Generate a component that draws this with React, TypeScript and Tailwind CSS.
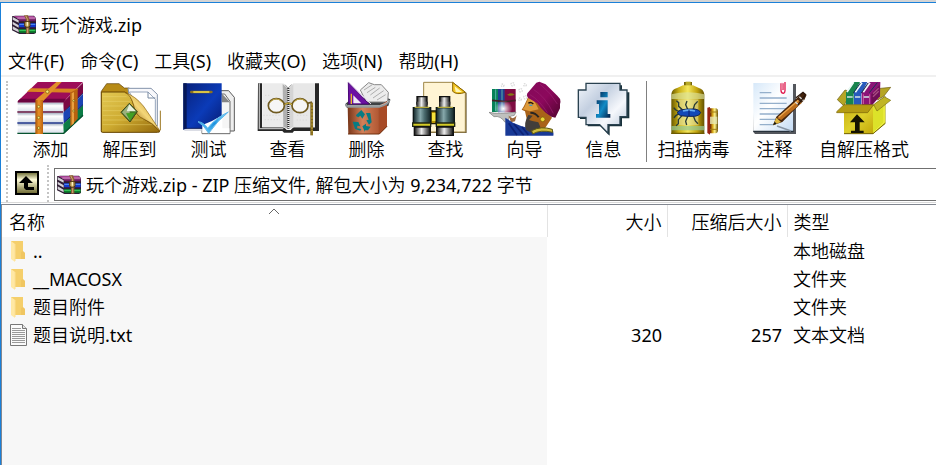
import React from 'react';

const AddIcon: React.FC = () => (
  <svg viewBox="42 15 216 165" className="h-[55px] w-[72px]" aria-hidden="true">
    <defs>
      <linearGradient id="pages" x1="0" x2="0" y1="0" y2="1">
        <stop offset="0" stopColor="#a9b4c4" />
        <stop offset=".35" stopColor="#fff" />
        <stop offset="1" stopColor="#d9e0ea" />
      </linearGradient>
      <linearGradient id="strap" x1="0" x2="1">
        <stop offset="0" stopColor="#a85408" />
        <stop offset=".45" stopColor="#e79026" />
        <stop offset="1" stopColor="#bd6410" />
      </linearGradient>
    </defs>
    <path d="M187 144 246 86V120L188 174Z" fill="#0b7c46" />
    <path d="M187 110 246 54V86L188 142Z" fill="#1c45b4" />
    <path d="M187 78 246 20V52L188 108Z" fill="#7c0844" />
    <path d="M50 76 110 18H246L187 78Z" fill="#9d0d58" />
    <path d="M50 76 58 68H195L187 80H50Z" fill="#6c0440" />
    <path d="M50 80H186V106H50Z" fill="url(#pages)" />
    <path d="M50 111H186V138H50Z" fill="url(#pages)" />
    <path d="M50 143H186V171H50Z" fill="url(#pages)" />
    <path d="M49 108H186" stroke="#5a0b39" strokeWidth="5" />
    <path d="M49 141H186" stroke="#132b83" strokeWidth="5" />
    <path d="M49 172H188L246 118" stroke="#07532f" strokeWidth="4" fill="none" />
    <path d="M188 108 246 52M188 141 246 86" stroke="#0b1d62" strokeWidth="3" />
    <path d="M78 47 90 37 232 38 222 50Z" fill="#d98420" />
    <path d="M103 72 166 18H182L126 76Z" fill="#e08f29" />
    <path d="M103 72H126V174H103Z" fill="url(#strap)" />
    <path d="M207 50 230 38V128L208 152Z" fill="#b9620f" />
    <path d="M212 52 219 48V142L212 148Z" fill="#e9a040" />
    <g fill="#f5e978" stroke="#7c5606" strokeWidth="2">
      <circle cx="139" cy="47" r="5" />
      <circle cx="113" cy="92" r="4" />
      <circle cx="113" cy="125" r="4" />
      <circle cx="113" cy="156" r="4" />
      <circle cx="218" cy="74" r="3" />
      <circle cx="218" cy="105" r="3" />
    </g>
  </svg>
);

const ExtractIcon: React.FC = () => (
  <svg viewBox="282 15 216 165" className="h-[55px] w-[72px]" aria-hidden="true">
    <defs>
      <linearGradient id="folder" x1="0" x2="1" y1="0" y2="1">
        <stop offset="0" stopColor="#e3c954" />
        <stop offset=".5" stopColor="#cdaa30" />
        <stop offset="1" stopColor="#94690c" />
      </linearGradient>
      <linearGradient id="flap" x1="0" x2="1" y1="1" y2="0">
        <stop offset=".2" stopColor="#8c5c06" />
        <stop offset=".5" stopColor="#f4d779" />
        <stop offset="1" stopColor="#a8770c" />
      </linearGradient>
    </defs>
    <path d="M304 46 320 23H357L373 36H388V168H304Z" fill="#b78b16" stroke="#5b3d03" strokeWidth="2" />
    <path d="M384 37H453L472 55V150L395 120Z" fill="#f8f8fb" stroke="#8493aa" strokeWidth="3" />
    <path d="M388 48H444L466 70V150L430 120Z" fill="#fff" stroke="#97a6bc" strokeWidth="3" />
    <path d="M444 48V66H466" fill="none" stroke="#7788a0" strokeWidth="3" />
    <path d="M304 48H374Q392 54 400 84 406 118 430 128 458 140 480 166 478 169 472 169H308Q304 169 304 164Z" fill="url(#folder)" stroke="#694703" strokeWidth="3" />
    <path d="M308 62H380M308 76H392M308 90H398M308 104H402M308 118H410M308 132H430M308 146H455" stroke="#f0dc7a" strokeWidth="2" opacity=".6" />
    <path d="M374 49Q392 56 400 84 408 122 430 128 458 140 480 165 446 112 430 90 406 60 374 49Z" fill="url(#flap)" stroke="#8b620c" strokeWidth="2" />
    <path d="M481 163V104" fill="none" stroke="#9c7620" strokeWidth="3" />
    <path d="M388 82 412 107 390 138 363 109Z" fill="#427b27" stroke="#40431b" strokeWidth="3" />
    <path d="M388 84 390 134 366 109Z" fill="#9bb07d" />
    <path d="M388 85 408 106H380Z" fill="#e9f0dd" />
    <path d="M378 112 405 110 390 134Z" fill="#42a024" />
  </svg>
);

const TestIcon: React.FC = () => (
  <svg viewBox="9 15 216 165" className="h-[55px] w-[72px]" aria-hidden="true">
    <defs>
      <linearGradient id="book" x1="0" x2="1" y1="0" y2="1">
        <stop offset="0" stopColor="#082078" />
        <stop offset=".55" stopColor="#0b3bb8" />
        <stop offset="1" stopColor="#061a70" />
      </linearGradient>
      <linearGradient id="check" x1="0" x2="1" y1="1" y2="0">
        <stop offset="0" stopColor="#76d2f8" />
        <stop offset=".5" stopColor="#1d93e0" />
        <stop offset="1" stopColor="#8adcff" />
      </linearGradient>
    </defs>
    <path d="M126 44H176L193 64V165H126Z" fill="#eee" stroke="#5a5a5a" strokeWidth="3" />
    <path d="M96 54H164L180 76V173H96Z" fill="#f5f5f5" stroke="#6b6b6b" strokeWidth="3" />
    <path d="M154 51 180 79H156Z" fill="#858585" />
    <path d="M40 22H155V158H50L40 161Z" fill="url(#book)" />
    <path d="M40 22H50V157L40 161Z" fill="#051858" />
    <path d="M43 162H97" stroke="#c9cdd8" strokeWidth="4" />
    <path d="M48 157H98" stroke="#101030" strokeWidth="2" />
    <path d="M64 48H124" stroke="#8d721c" strokeWidth="8" strokeLinecap="round" />
    <path d="M70 48H118" stroke="#ffec58" strokeWidth="4" />
    <path d="M97 147 126 135 157 118V157H178V171H97Z" fill="#fff" />
    <path d="M84 137Q102 139 113 157Q136 126 175 108Q143 133 116 172Q103 149 84 137Z" fill="url(#check)" stroke="#5eb7eb" strokeWidth="3" />
  </svg>
);

const ViewIcon: React.FC = () => (
  <svg viewBox="246 15 216 165" className="h-[55px] w-[72px]" aria-hidden="true">
    <path d="M264 22 276 22V154H344L350 162H362L370 154H435V22H447V165H372L368 170H342L337 165H263Z" fill="#272727" />
    <path d="M268 22V158H340" fill="none" stroke="#b6b6b6" strokeWidth="4" />
    <path d="M277 22H340L354 37V161L338 154H277Z" fill="#ebebeb" />
    <path d="M435 22H370L356 37V161L372 154H435Z" fill="#e7e7e7" />
    <path d="M338 24 354 38V158L340 152Z" fill="#b0b0b0" />
    <path d="M356 38 370 25V152L357 158Z" fill="#d4d4d4" />
    <path d="M355 36V158" stroke="#292929" strokeWidth="6" strokeDasharray="3 3" />
    <path d="M345 26 354 36 365 26" fill="none" stroke="#6b6b6b" strokeWidth="2" />
    <path d="M285 58H300M285 76H294M280 118H332M284 131H330M381 118H415M380 132H415" stroke="#d3d3d3" strokeWidth="2" strokeDasharray="4 5" />
    <g fill="none" stroke="#6f5a20" strokeWidth="5">
      <ellipse cx="319" cy="89" rx="24" ry="21" fill="#f6f6f6" />
      <ellipse cx="390" cy="89" rx="24" ry="21" fill="#f6f6f6" />
      <path d="M342 86Q355 78 368 86M413 82 426 78" />
    </g>
    <path d="M300 79Q318 58 337 79M371 79Q390 58 409 79" fill="none" stroke="#c6ad4a" strokeWidth="3" />
    <path d="M344 86Q355 76 366 86" fill="none" stroke="#e7c945" strokeWidth="3" />
    <path d="M425 80V178" stroke="#79601c" strokeWidth="8" />
    <path d="M426 82V176" stroke="#c7aa37" strokeWidth="3" strokeDasharray="7 3" />
  </svg>
);

const DeleteIcon: React.FC = () => (
  <svg viewBox="0 15 216 165" className="h-[55px] w-[72px]" aria-hidden="true">
    <defs>
      <linearGradient id="bin" x1="0" x2="1">
        <stop offset="0" stopColor="#773518" />
        <stop offset=".38" stopColor="#d28059" />
        <stop offset=".76" stopColor="#b45b36" />
        <stop offset="1" stopColor="#68270e" />
      </linearGradient>
    </defs>
    <path d="M43 84 54 74 160 62 178 70 172 90 145 96H48Z" fill="#3e4244" />
    <path d="M88 42 113 20 130 26 151 26 172 49 170 78H106Z" fill="#ececec" stroke="#888" strokeWidth="3" />
    <path d="M99 42 124 26M108 50 133 34M118 57 146 36M126 66 158 44M138 72 164 56" stroke="#adadad" strokeWidth="3" />
    <path d="M52 20 114 84H53Z" fill="#6c11a2" stroke="#4b0778" strokeWidth="3" />
    <path d="M53 18 120 84" stroke="#e5d8ef" strokeWidth="3" />
    <path d="M67 58 91 82H67Z" fill="#f1e9f5" />
    <path d="M61 53V84" stroke="#e7bc25" strokeWidth="4" />
    <path d="M50 91H145L168 75V151L145 174H52Z" fill="url(#bin)" />
    <path d="M145 91 168 75V151L145 174Z" fill="#a84b27" />
    <path d="M51 174H145L168 151" stroke="#70300f" strokeWidth="3" fill="none" />
    <path d="M45 84Q44 92 53 92H145Q171 86 176 72" fill="none" stroke="#909699" strokeWidth="6" />
    <path d="M50 89H145Q165 83 172 75" fill="none" stroke="#d9dfe1" strokeWidth="2" />
    <g fill="#087b83">
      <path d="M76 116 91 102 102 115 94 128 88 119 82 124 75 120Z" />
      <path d="M105 111H118L122 139 114 146 106 133 113 131Z" />
      <path d="M94 151 105 143V150L119 152 111 163H102V168Z" />
      <path d="M65 137 82 138 88 151 79 149 78 157 91 159 88 164 72 159Z" />
    </g>
  </svg>
);

const FindIcon: React.FC = () => (
  <svg viewBox="240 15 216 165" className="h-[55px] w-[72px]" aria-hidden="true">
    <defs>
      <linearGradient id="barrel" x1="0" x2="1">
        <stop offset="0" stopColor="#1b3033" />
        <stop offset=".4" stopColor="#86a8ab" />
        <stop offset=".65" stopColor="#4b6c6f" />
        <stop offset="1" stopColor="#182a2c" />
      </linearGradient>
      <linearGradient id="metal" x1="0" x2="1">
        <stop offset="0" stopColor="#111" />
        <stop offset=".45" stopColor="#eee" />
        <stop offset="1" stopColor="#111" />
      </linearGradient>
    </defs>
    <path d="M283 22H370L410 51V171H283Z" fill="#73633f" />
    <path d="M281 19H368L406 49V168H281Z" fill="#fff4d4" stroke="#9d8547" strokeWidth="3" />
    <path d="M368 19 406 49Q380 58 368 46Z" fill="#f2c522" stroke="#8c6500" strokeWidth="3" />
    <path d="M374 31 396 48H377Z" fill="#fff6b6" />
    <path d="M302 105H319V143H302Z" fill="#b99405" stroke="#221c02" strokeWidth="4" />
    <path d="M306 111H317V135H306Z" fill="#f4e13c" />
    <path d="M261 62H291V84H261Z" fill="url(#metal)" stroke="#111" strokeWidth="4" />
    <path d="M329 62H359V84H329Z" fill="url(#metal)" stroke="#111" strokeWidth="4" />
    <path d="M259 77H293V96H259Z" fill="url(#metal)" />
    <path d="M327 77H361V96H327Z" fill="url(#metal)" />
    <path d="M250 95H302V143H250ZM319 95H373V143H319Z" fill="#0d1718" stroke="#0d1718" strokeWidth="4" />
    <path d="M252 97H300V141H252Z" fill="url(#barrel)" />
    <path d="M321 97H371V141H321Z" fill="url(#barrel)" />
    <path d="M254 94H298M323 94H369" stroke="#b1a638" strokeWidth="4" />
    <path d="M246 139H304V153H246ZM317 139H376V153H317Z" fill="#202612" />
    <path d="M250 146H300M321 146H372" stroke="#d4cb28" strokeWidth="6" />
    <path d="M253 153H301V178H253Z" fill="url(#metal)" stroke="#111" strokeWidth="4" />
    <path d="M320 153H370V178H320Z" fill="url(#metal)" stroke="#111" strokeWidth="4" />
  </svg>
);

const WizardIcon: React.FC = () => (
  <svg viewBox="27 15 216 165" className="h-[55px] w-[72px]" aria-hidden="true">
    <defs>
      <linearGradient id="turban" x1="0" x2="1" y1="0" y2="1">
        <stop offset="0" stopColor="#850a5a" />
        <stop offset=".5" stopColor="#8c085c" />
        <stop offset="1" stopColor="#51052f" />
      </linearGradient>
      <radialGradient id="glow">
        <stop offset="0" stopColor="#fff" />
        <stop offset="1" stopColor="#fff" stopOpacity="0" />
      </radialGradient>
    </defs>
    <g fill="none" stroke="#d8d8d8" strokeWidth="4" strokeDasharray="4 3">
      <circle cx="68" cy="28" r="4" />
      <circle cx="98" cy="25" r="5" />
      <circle cx="122" cy="43" r="5" />
      <circle cx="136" cy="64" r="5" />
      <circle cx="120" cy="70" r="4" />
      <circle cx="135" cy="27" r="4" />
    </g>
    <path d="M36 39H56V108H36Z" fill="#078258" />
    <path d="M54 39H76V109H54Z" fill="#203f91" />
    <path d="M74 39H107V109H74Z" fill="#7f0c42" />
    <path d="M47 40V105M66 40V105" stroke="#56b1a8" strokeWidth="3" />
    <path d="M36 73 76 77 107 73" stroke="#422025" strokeWidth="5" fill="none" />
    <path d="M81 56Q92 48 104 56Q92 62 81 56Z" fill="#837c13" />
    <ellipse cx="70" cy="98" rx="27" ry="25" fill="url(#glow)" />
    <path d="M27 109Q57 116 108 108L103 118Q83 121 85 132L75 139Q62 118 42 122Z" fill="#bfc0be" stroke="#777" strokeWidth="2" />
    <path d="M85 118Q99 135 110 118L105 136 93 139Z" fill="#9d693d" />
    <path d="M76 178V125L99 140Q121 150 147 157L216 159Q222 167 220 179H76Z" fill="#183996" />
    <path d="M86 142 111 177M102 144 131 177M126 153 145 176" stroke="#0d2276" strokeWidth="5" />
    <path d="M145 62 132 90 125 101 135 106 139 124 150 158H194L216 125 187 91 160 62Z" fill="#a96319" />
    <path d="M145 66 134 92 128 100 150 106 176 100 160 70Z" fill="#dd9a3a" />
    <path d="M145 82Q152 76 160 84" stroke="#261507" strokeWidth="4" fill="none" />
    <path d="M148 88H157" stroke="#3f9ac0" strokeWidth="4" />
    <path d="M145 117Q130 142 138 162L160 173 181 153 175 139 157 135 147 132 158 119Z" fill="#423e3b" />
    <path d="M151 110Q167 110 176 124" stroke="#292522" strokeWidth="6" fill="none" />
    <path d="M145 66Q136 56 146 47L169 20 178 17 197 25 232 59Q245 70 240 84V97L226 125 214 122 197 110Q182 98 172 82Z" fill="url(#turban)" />
    <path d="M150 56Q178 72 202 110M160 40Q196 62 220 112M180 24Q214 52 232 84" stroke="#9a2170" strokeWidth="2" fill="none" />
    <circle cx="188" cy="130" r="7" fill="#ead738" stroke="#775c04" strokeWidth="2" />
    <path d="M155 164Q183 149 217 160L218 169Q181 160 158 174Z" fill="#cdbb3c" stroke="#5e5813" strokeWidth="3" />
  </svg>
);

const InfoIcon: React.FC = () => (
  <svg viewBox="264 15 216 165" className="h-[55px] w-[72px]" aria-hidden="true">
    <defs>
      <linearGradient id="bubble" x1="0" x2="1" y1="0" y2="1">
        <stop offset="0" stopColor="#f2f6fb" />
        <stop offset=".35" stopColor="#c3cfe0" />
        <stop offset=".65" stopColor="#f6f8fc" />
        <stop offset="1" stopColor="#aebfd3" />
      </linearGradient>
      <linearGradient id="letter" x1="0" x2="1" y1="0" y2="1">
        <stop offset="0" stopColor="#021e49" />
        <stop offset=".55" stopColor="#118bc6" />
        <stop offset="1" stopColor="#021c44" />
      </linearGradient>
    </defs>
    <path d="M324 28H426V49H448V127H426V151H389V179L363 151H323V129H300V48H324Z" fill="#18313a" />
    <path d="M318 22H420V42H441V122H420V146H384V172L359 146H318V124H295V42H318Z" fill="url(#bubble)" stroke="#2a4250" strokeWidth="4" />
    <path d="M361 48H383V64H361ZM350 73H383V114H391V125H348V114H357V84H350Z" fill="url(#letter)" />
  </svg>
);

const ScanIcon: React.FC = () => (
  <svg viewBox="51 15 216 165" className="h-[55px] w-[72px]" aria-hidden="true">
    <defs>
      <linearGradient id="can" x1="0" x2="1">
        <stop offset="0" stopColor="#695900" />
        <stop offset=".22" stopColor="#c6ac13" />
        <stop offset=".5" stopColor="#f5e75b" />
        <stop offset=".78" stopColor="#c2a30d" />
        <stop offset="1" stopColor="#645100" />
      </linearGradient>
      <linearGradient id="cap" x1="0" x2="1">
        <stop offset="0" stopColor="#681b08" />
        <stop offset=".3" stopColor="#cf9d12" />
        <stop offset=".6" stopColor="#fff48a" />
        <stop offset="1" stopColor="#604900" />
      </linearGradient>
    </defs>
    <path d="M129 18H153V32H129Z" fill="#75640b" />
    <path d="M134 17H149V29H134Z" fill="#b9aa26" />
    <path d="M91 55Q92 39 110 35L126 28H156L172 35Q188 39 190 55V174H91Z" fill="url(#can)" />
    <path d="M91 55Q139 42 190 55V69H91Z" fill="#dce3a0" opacity=".65" />
    <path d="M110 70H172V148H110Z" fill="#e3e6b8" opacity=".5" />
    <path d="M91 150H190V163H91Z" fill="#94c999" opacity=".7" />
    <path d="M91 172H190" stroke="#6d5b00" strokeWidth="4" />
    <g stroke="#283b36" strokeWidth="4" fill="none">
      <path d="M125 102 113 91V80L106 74M141 102 134 86 138 75M156 102 161 86 170 76M123 119 112 131V143L105 149M141 119 134 136 137 147M157 119 163 135 171 143" />
      <path d="M116 106Q104 105 98 95M116 114Q105 115 99 126" />
    </g>
    <path d="M108 110 118 102Q135 98 162 99Q176 101 179 110Q175 120 161 121Q139 122 118 119Z" fill="#1248b7" stroke="#162654" strokeWidth="3" />
    <path d="M126 105Q144 100 162 105" stroke="#65adf4" strokeWidth="5" fill="none" />
    <path d="M144 101V120" stroke="#0a216e" strokeWidth="3" />
    <path d="M199 95 207 93V176L199 171Z" fill="#9a2414" />
    <path d="M207 97H226Q231 99 231 106V162Q231 171 224 172H207Z" fill="url(#cap)" />
    <path d="M207 108H231M207 160H231" stroke="#9f7d14" strokeWidth="3" />
    <path d="M207 122H229V144H207Z" fill="#e6e9b4" opacity=".8" />
  </svg>
);

const CommentIcon: React.FC = () => (
  <svg viewBox="294 15 216 165" className="h-[55px] w-[72px]" aria-hidden="true">
    <defs>
      <linearGradient id="note" x1="0" x2="1" y1="0" y2="1">
        <stop offset="0" stopColor="#d6e8f9" />
        <stop offset=".45" stopColor="#fff" />
        <stop offset="1" stopColor="#c5dcf5" />
      </linearGradient>
    </defs>
    <path d="M342 24H465V174H342L337 168Z" fill="#53565c" />
    <path d="M337 21H456V165H337Z" fill="url(#note)" />
    <path d="M356 50H391M356 66H437M356 82H437M356 98H437M356 114H437M356 130H411M356 146H396" stroke="#94afcb" strokeWidth="4" />
    <path d="M337 166H458" stroke="#27313b" strokeWidth="4" />
    <path d="M408 150 450 165" stroke="#8795a5" strokeWidth="4" />
    <path d="M420 22V44Q421 52 427 52Q432 50 432 44V18M426 22V42" fill="none" stroke="#e01b50" strokeWidth="4" />
    <path d="M423 20V40" stroke="#f6a0b4" strokeWidth="2" />
    <path d="M396 148 406 122 468 66 486 49 497 56 490 72 424 138Z" fill="#45250d" />
    <path d="M408 127 470 71 482 81 421 132Z" fill="#bc6d1c" />
    <path d="M413 124 472 73" stroke="#eba64d" strokeWidth="4" />
    <path d="M396 148 406 125 420 138Z" fill="#deb643" />
    <path d="M396 148 401 137 407 143Z" fill="#151515" />
    <path d="M463 78 474 88M475 62 488 74" stroke="#d7d9d9" strokeWidth="4" />
    <path d="M465 65 486 49 494 56M492 58 470 88" stroke="#29160b" strokeWidth="4" fill="none" />
  </svg>
);

const SfxIcon: React.FC = () => (
  <svg viewBox="144 15 216 165" className="h-[55px] w-[72px]" aria-hidden="true">
    <defs>
      <linearGradient id="box" x1="0" x2="1" y1="0" y2="1">
        <stop offset="0" stopColor="#c9ae16" />
        <stop offset=".5" stopColor="#ddd02a" />
        <stop offset="1" stopColor="#c3a70a" />
      </linearGradient>
    </defs>
    <path d="M172 71 195 42 212 47 192 90ZM292 38 332 34 312 60 293 72Z" fill="#b5a524" stroke="#6a5910" strokeWidth="2" />
    <path d="M192 88H280L316 60V142L279 173H192Z" fill="#5e510b" />
    <path d="M198 49 222 18H240L221 54V86H198Z" fill="#18844e" />
    <path d="M222 49 245 18H262L244 54V86H222Z" fill="#275abd" />
    <path d="M245 49 268 18H301L300 61 274 90H245Z" fill="#8b1377" />
    <path d="M201 48 221 19M226 49 246 20M250 49 270 20" stroke="#effaf8" strokeWidth="5" />
    <path d="M220 51 241 21M244 51 264 21M268 50 292 20" stroke="#173551" strokeWidth="3" />
    <path d="M274 54 299 26V61L274 88Z" fill="#6f0e55" />
    <path d="M279 53 296 37M279 62 296 46" stroke="#a94d85" strokeWidth="4" />
    <path d="M201 63H218M225 63H241M249 63H267" stroke="#d3e4e7" strokeWidth="4" />
    <path d="M250 55V84M269 55V84" stroke="#cc669f" strokeWidth="3" />
    <path d="M192 89H279V173H192Z" fill="url(#box)" />
    <path d="M279 89 316 63V142L279 173Z" fill="#dce229" />
    <path d="M282 91 312 69V139L281 169" fill="none" stroke="#f3f04d" strokeWidth="3" />
    <path d="M170 107 192 86H281L263 110H170Z" fill="#b49b13" stroke="#786407" strokeWidth="2" />
    <path d="M281 86 313 62 332 73 291 105Z" fill="#c0b525" stroke="#796c10" strokeWidth="2" />
    <path d="M192 173H279L316 142" fill="none" stroke="#766406" strokeWidth="3" />
    <path d="M231 115 254 139H239V164H251V171H213V164H225V139H210Z" fill="#151300" />
  </svg>
);

const ArchiveIcon: React.FC = () => (
  <svg viewBox="0 0 72 57" className="h-[19px] w-[24px] shrink-0" aria-hidden="true">
    <path d="M0 4 10 2H66L72 10V54L66 57H22L0 46Z" fill="#2e1d33" />
    <path d="M2 6 20 16V23L2 14ZM2 20 20 31V38L2 28ZM2 34 20 44V52L2 43Z" fill="#d5d2d8" />
    <path d="M4 3H64L71 10V14H22Z" fill="#a0408e" />
    <path d="M16 9H70" stroke="#d68bc6" strokeWidth="3" />
    <path d="M20 14H71V19H22Z" fill="#6e1b62" />
    <path d="M20 25H71V37H22Z" fill="#1238cf" />
    <path d="M22 28H70" stroke="#5a97f5" strokeWidth="3" />
    <path d="M20 43H71V53H22Z" fill="#0a7f2c" />
    <path d="M22 46H70" stroke="#3fd05f" strokeWidth="3" />
    <path d="M36 1H48L52 12V56H42V14Z" fill="#8a5f33" />
    <path d="M41 2 47 14V54" stroke="#d2a878" strokeWidth="3" fill="none" />
    <path d="M38 20H54V34L46 38 38 34Z" fill="#b79a58" stroke="#4d3410" strokeWidth="3" />
    <path d="M46 21V32" stroke="#fff5c1" strokeWidth="4" />
  </svg>
);

const FolderIcon: React.FC = () => (
  <svg viewBox="0 0 18 24" className="h-[24px] w-[18px] shrink-0" aria-hidden="true">
    <path d="M2 2H14V13L16 14V20H2Z" fill="#f5cf6b" />
    <path d="M14 12 16 14V20H12V13Z" fill="#f0c661" />
    <path d="M2 2 6 5V23L2 20Z" fill="#ffe8a4" />
    <path d="M6 5V22" stroke="#fbdf94" />
  </svg>
);

const TextFileIcon: React.FC = () => (
  <svg viewBox="0 0 18 24" className="h-[24px] w-[18px] shrink-0" aria-hidden="true">
    <path d="M1.5 1.5H13.5L17.5 5.5V22.5H1.5Z" fill="#fafafa" stroke="#777" />
    <path d="M13.5 1.5V5.5H17.5" fill="#e5e5e5" stroke="#777" />
    <path d="M3 5.5H12M3 7.5H16M3 9.5H16M3 11.5H16M3 13.5H16M3 15.5H16M3 17.5H16M3 19.5H16" stroke="#999" />
  </svg>
);

const menus = ['文件(F)', '命令(C)', '工具(S)', '收藏夹(O)', '选项(N)', '帮助(H)'];

const mainTools = [
  { label: '添加', Icon: AddIcon },
  { label: '解压到', Icon: ExtractIcon },
  { label: '测试', Icon: TestIcon },
  { label: '查看', Icon: ViewIcon },
  { label: '删除', Icon: DeleteIcon },
  { label: '查找', Icon: FindIcon },
  { label: '向导', Icon: WizardIcon },
  { label: '信息', Icon: InfoIcon },
];

const extraTools = [
  { label: '扫描病毒', Icon: ScanIcon },
  { label: '注释', Icon: CommentIcon },
  { label: '自解压格式', Icon: SfxIcon },
];

const files = [
  { name: '..', size: '', packed: '', type: '本地磁盘', Icon: FolderIcon },
  { name: '__MACOSX', size: '', packed: '', type: '文件夹', Icon: FolderIcon },
  { name: '题目附件', size: '', packed: '', type: '文件夹', Icon: FolderIcon },
  { name: '题目说明.txt', size: '320', packed: '257', type: '文本文档', Icon: TextFileIcon },
];

const ToolButton: React.FC<{ label: string; Icon: React.FC }> = ({ label, Icon }) => (
  <button type="button" className="flex min-w-[79px] shrink-0 flex-col items-center px-[3px] whitespace-nowrap">
    <Icon />
    <span>{label}</span>
  </button>
);

export default function App() {
  return (
    <div className="flex min-h-screen flex-col overflow-hidden bg-[#d4d4d4] pt-[2px] font-['Noto_Sans','Noto_Sans_CJK_SC_DemiLight','Noto_Sans_CJK_SC_Light','Noto_Sans_CJK_SC',sans-serif] text-[18px] leading-[26px] text-black">
      <div className="flex flex-1 flex-col border-t border-l border-[#1a80d9] bg-white">
        <header className="flex h-[43px] items-center gap-[5px] pl-[11px]">
          <ArchiveIcon />
          <h1>玩个游戏.zip</h1>
        </header>

        <nav className="flex h-[29px] items-center gap-[16px] pl-[7px] whitespace-nowrap">
          {menus.map((menu) => (
            <button type="button" key={menu}>{menu}</button>
          ))}
        </nav>

        <div className="flex border-t-2 border-[#f0f0f0] pt-[4px] pb-[3px] pl-[5px]">
          <div className="mr-[3px] border-l-2 border-dotted border-[#c4c4c4]" />
          {mainTools.map((tool) => (
            <ToolButton key={tool.label} {...tool} />
          ))}
          <div className="mr-[7px] ml-[3px] border-l border-[#808080]" />
          <div className="flex gap-[2px]">
            {extraTools.map((tool) => (
              <ToolButton key={tool.label} {...tool} />
            ))}
          </div>
        </div>

        <div className="flex h-[38px] border-b border-[#d9d9d9] pl-[5px]">
          <div className="mr-[7px] border-l-2 border-dotted border-[#c4c4c4]" />
          <button type="button" aria-label="Up" className="mt-[6px] h-[24px] w-[24px]">
            <svg viewBox="0 0 24 24" aria-hidden="true">
              <defs>
                <linearGradient id="up" x1="0" x2="0" y1="0" y2="1">
                  <stop offset="0" stopColor="#62622a" />
                  <stop offset=".35" stopColor="#fffcd8" />
                  <stop offset="1" stopColor="#67632b" />
                </linearGradient>
              </defs>
              <path d="M1 1H23V23H1Z" fill="url(#up)" stroke="#000" strokeWidth="2" />
              <path d="M11 5 18 12H13V16H19V19H11L9 17V12H4Z" fill="#000" />
            </svg>
          </button>
          <div className="mr-[5px] ml-[8px] border-l-2 border-dotted border-[#c4c4c4]" />
          <div className="mt-[3px] flex h-[33px] flex-1 items-center gap-[5px] border border-r-0 border-[#707070] pl-[2px]">
            <ArchiveIcon />
            <input
              aria-label="Address"
              readOnly
              value="玩个游戏.zip - ZIP 压缩文件, 解包大小为 9,234,722 字节"
              className="min-w-0 flex-1 bg-transparent outline-none"
            />
          </div>
        </div>

        <main className="mt-px flex flex-1 border-t border-l border-[#828790]">
          <table className="w-full table-fixed border-collapse">
            <colgroup>
              <col className="w-[545px]" />
              <col className="w-[120px]" />
              <col className="w-[120px]" />
              <col />
            </colgroup>
            <thead>
              <tr className="h-[32px]">
                <th className="relative border-r border-[#e3e3e3] pt-[2px] pl-[7px] text-left font-normal">
                  名称
                  <svg viewBox="0 0 12 7" className="absolute top-[3px] left-1/2 h-[7px] w-[12px] -translate-x-1/2" aria-hidden="true">
                    <path d="M1 6 6 1 11 6" fill="none" stroke="#666" />
                  </svg>
                </th>
                <th className="border-r border-[#e3e3e3] pt-[2px] pr-[5px] text-right font-normal">大小</th>
                <th className="border-r border-[#e3e3e3] pt-[2px] pr-[5px] text-right font-normal">压缩后大小</th>
                <th className="pt-[2px] pl-[6px] text-left font-normal">类型</th>
              </tr>
            </thead>
            <tbody>
              {files.map(({ name, size, packed, type, Icon }) => (
                <tr key={name} className="h-[28px]">
                  <td className="bg-[#f7f7f7] pl-[7px]">
                    <div className="flex items-center gap-[6px]">
                      <Icon />
                      {name}
                    </div>
                  </td>
                  <td className="pr-[5px] text-right">{size}</td>
                  <td className="pr-[5px] text-right">{packed}</td>
                  <td className="pl-[6px]">{type}</td>
                </tr>
              ))}
              <tr>
                <td className="bg-[#f7f7f7]" />
                <td colSpan={3} />
              </tr>
            </tbody>
          </table>
        </main>
      </div>
    </div>
  );
}
